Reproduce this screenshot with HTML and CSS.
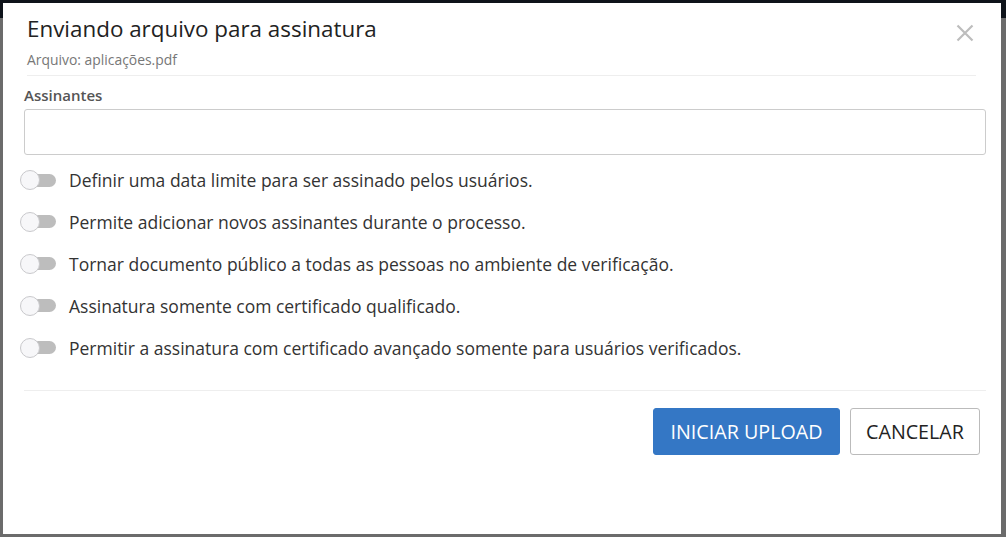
FILE: index.html
```html
<!DOCTYPE html>
<html lang="pt-BR">
<head>
<meta charset="utf-8">
<title>Enviando arquivo para assinatura</title>
<link rel="stylesheet" href="styles.css">
</head>
<body>
<div class="backdrop">
  <div class="modal">
    <div class="modal-header">
      <div class="title-row">
        <h1 class="title">Enviando arquivo para assinatura</h1>
        <button class="close" aria-label="Fechar">
          <svg width="18" height="18" viewBox="0 0 18 18"><path d="M1.5 1.5 L16.5 16.5 M16.5 1.5 L1.5 16.5" stroke="#bdbdbd" stroke-width="2.2" fill="none"/></svg>
        </button>
      </div>
      <div class="subtitle">Arquivo: aplicações.pdf</div>
    </div>
    <div class="modal-body">
      <label class="field-label">Assinantes</label>
      <input class="field-input" type="text">
      <div class="options">
        <div class="option"><span class="switch"><span class="knob"></span></span><span class="option-text">Definir uma data limite para ser assinado pelos usuários.</span></div>
        <div class="option"><span class="switch"><span class="knob"></span></span><span class="option-text">Permite adicionar novos assinantes durante o processo.</span></div>
        <div class="option"><span class="switch"><span class="knob"></span></span><span class="option-text">Tornar documento público a todas as pessoas no ambiente de verificação.</span></div>
        <div class="option"><span class="switch"><span class="knob"></span></span><span class="option-text">Assinatura somente com certificado qualificado.</span></div>
        <div class="option"><span class="switch"><span class="knob"></span></span><span class="option-text">Permitir a assinatura com certificado avançado somente para usuários verificados.</span></div>
      </div>
      <div class="footer">
        <button class="btn btn-primary">INICIAR UPLOAD</button>
        <button class="btn btn-default">CANCELAR</button>
      </div>
    </div>
  </div>
</div>
</body>
</html>
```

FILE: styles.css
```css
* { box-sizing: border-box; }
html, body { margin: 0; padding: 0; }
body {
  font-family: "Open Sans", "Liberation Sans", sans-serif;
  color: #333;
}
.backdrop {
  width: 1006px;
  height: 537px;
  overflow: hidden;
  background: linear-gradient(#0e131a 0, #0e131a 18px, #6b6b6b 18px);
  padding: 3px 5px 3px 3px;
}
.modal {
  width: 998px;
  height: 531px;
  background: #fff;
  display: flex;
  flex-direction: column;
}
.modal-header {
  margin: 0 25px 0 24px;
  padding: 11px 0 6px 0;
  border-bottom: 1px solid #eeeeee;
}
.title-row {
  display: flex;
  justify-content: space-between;
  align-items: flex-start;
}
.title {
  margin: 0;
  font-size: 22.4px;
  line-height: 30px;
  font-weight: 400;
  color: #222;
}
.close {
  border: 0;
  background: none;
  padding: 0;
  margin: 10px 2px 0 0;
  width: 18px;
  height: 18px;
  display: block;
}
.close svg { display: block; }
.subtitle {
  margin-top: 7px;
  font-size: 13.9px;
  line-height: 18px;
  color: #777;
}
.modal-body {
  padding: 0 15px 0 21px;
  display: flex;
  flex-direction: column;
}
.field-label {
  margin-top: 9px;
  font-size: 15px;
  line-height: 20px;
  font-weight: 600;
  color: #555;
}
.field-input {
  margin-top: 4px;
  height: 46px;
  width: 100%;
  border: 1px solid #cccccc;
  border-radius: 3px;
  font: inherit;
  padding: 0 12px;
}
.options {
  margin-top: 13px;
  display: flex;
  flex-direction: column;
  gap: 17.9px;
}
.option {
  display: flex;
  align-items: center;
  height: 24px;
  margin-left: -4px;
}
.switch {
  position: relative;
  width: 36px;
  height: 13px;
  flex: none;
  display: block;
}
.switch::before {
  content: "";
  position: absolute;
  left: 8px;
  right: 0;
  top: 0;
  bottom: 0;
  background: #bdbdbd;
  border-radius: 7px;
}
.knob {
  position: absolute;
  left: 0;
  top: -3.5px;
  width: 20px;
  height: 20px;
  border-radius: 50%;
  background: #f7f7f9;
  border: 1px solid #c9c9cc;
}
.option-text {
  margin-left: 13px;
  font-size: 17.5px;
  line-height: 24px;
  color: #333;
  white-space: nowrap;
}
.footer {
  margin-top: 30.4px;
  border-top: 1px solid #eeeeee;
  padding: 17px 6px 0 0;
  display: flex;
  justify-content: flex-end;
  gap: 10px;
}
.btn {
  height: 47px;
  font-family: inherit;
  font-size: 19.7px;
  border-radius: 3px;
  padding: 0 15px;
  cursor: pointer;
}
.btn-primary {
  width: 187px;
  background: #3477c5;
  border: 1px solid #3477c5;
  color: #fff;
}
.btn-default {
  width: 130px;
  background: #fff;
  border: 1px solid #bbbbbb;
  color: #222;
}
```
